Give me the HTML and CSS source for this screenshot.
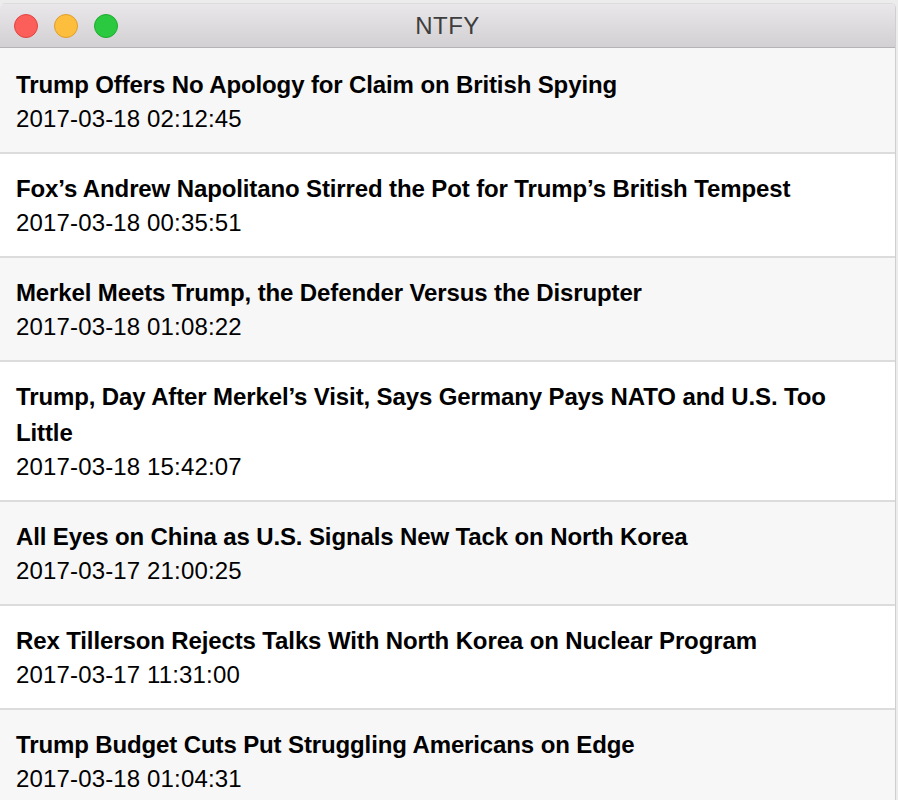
FILE: index.html
```html
<!DOCTYPE html>
<html lang="en">
<head>
<meta charset="utf-8">
<title>NTFY</title>
<link rel="stylesheet" href="styles.css">
</head>
<body>
<div class="window">
  <header class="titlebar">
    <div class="lights">
      <span class="light close"></span>
      <span class="light min"></span>
      <span class="light max"></span>
    </div>
    <div class="title">NTFY</div>
  </header>
  <ul class="list">
    <li class="item"><div class="headline">Trump Offers No Apology for Claim on British Spying</div><div class="date">2017-03-18 02:12:45</div></li>
    <li class="item"><div class="headline">Fox’s Andrew Napolitano Stirred the Pot for Trump’s British Tempest</div><div class="date">2017-03-18 00:35:51</div></li>
    <li class="item"><div class="headline">Merkel Meets Trump, the Defender Versus the Disrupter</div><div class="date">2017-03-18 01:08:22</div></li>
    <li class="item"><div class="headline">Trump, Day After Merkel’s Visit, Says Germany Pays NATO and U.S. Too Little</div><div class="date">2017-03-18 15:42:07</div></li>
    <li class="item"><div class="headline">All Eyes on China as U.S. Signals New Tack on North Korea</div><div class="date">2017-03-17 21:00:25</div></li>
    <li class="item"><div class="headline">Rex Tillerson Rejects Talks With North Korea on Nuclear Program</div><div class="date">2017-03-17 11:31:00</div></li>
    <li class="item"><div class="headline">Trump Budget Cuts Put Struggling Americans on Edge</div><div class="date">2017-03-18 01:04:31</div></li>
  </ul>
</div>
</body>
</html>
```

FILE: styles.css
```css
html, body {
  margin: 0;
  padding: 0;
  background: #ececec;
  height: 800px;
  overflow: hidden;
}
body {
  font-family: "Liberation Sans", Arial, Helvetica, sans-serif;
  padding-top: 3px;
}
.window {
  width: 895px;
  height: 797px;
  background: #f7f7f7;
  border-right: 1px solid #cfcfcf;
  border-radius: 5px 5px 0 0;
  overflow: hidden;
  display: flex;
  flex-direction: column;
}
.titlebar {
  position: relative;
  flex: none;
  background: linear-gradient(#e9e7e9, #d2d0d2);
  border-top: 1px solid #dcdcdc;
  border-bottom: 1px solid #b4b4b4;
  display: flex;
  align-items: center;
  justify-content: center;
  box-sizing: border-box;
  height: 45px;
}
.lights {
  position: absolute;
  left: 14px;
  top: 10px;
  display: flex;
  gap: 16px;
}
.light {
  width: 22px;
  height: 22px;
  border-radius: 50%;
  border: 1px solid;
  display: block;
}
.close { background: #fc5f5a; border-color: #e0443f; }
.min { background: #fdbd3d; border-color: #df9e2a; }
.max { background: #2ac940; border-color: #1fab2f; }
.title {
  font-size: 24px;
  color: #3e3e3e;
  letter-spacing: 0.4px;
  padding-top: 1px;
}
.list {
  list-style: none;
  margin: 0;
  padding: 0;
}
.item {
  padding: 17px 16px 17px;
  border-bottom: 2px solid #dcdcdc;
  color: #000;
}
.item:first-child { padding-top: 19px; }
.item:nth-child(odd) { background: #f7f7f7; }
.item:nth-child(even) { background: #ffffff; }
.headline {
  font-weight: bold;
  font-size: 24px;
  line-height: 36px;
  letter-spacing: -0.12px;
}
.date {
  font-size: 24px;
  line-height: 32px;
  letter-spacing: 0.15px;
}
```
